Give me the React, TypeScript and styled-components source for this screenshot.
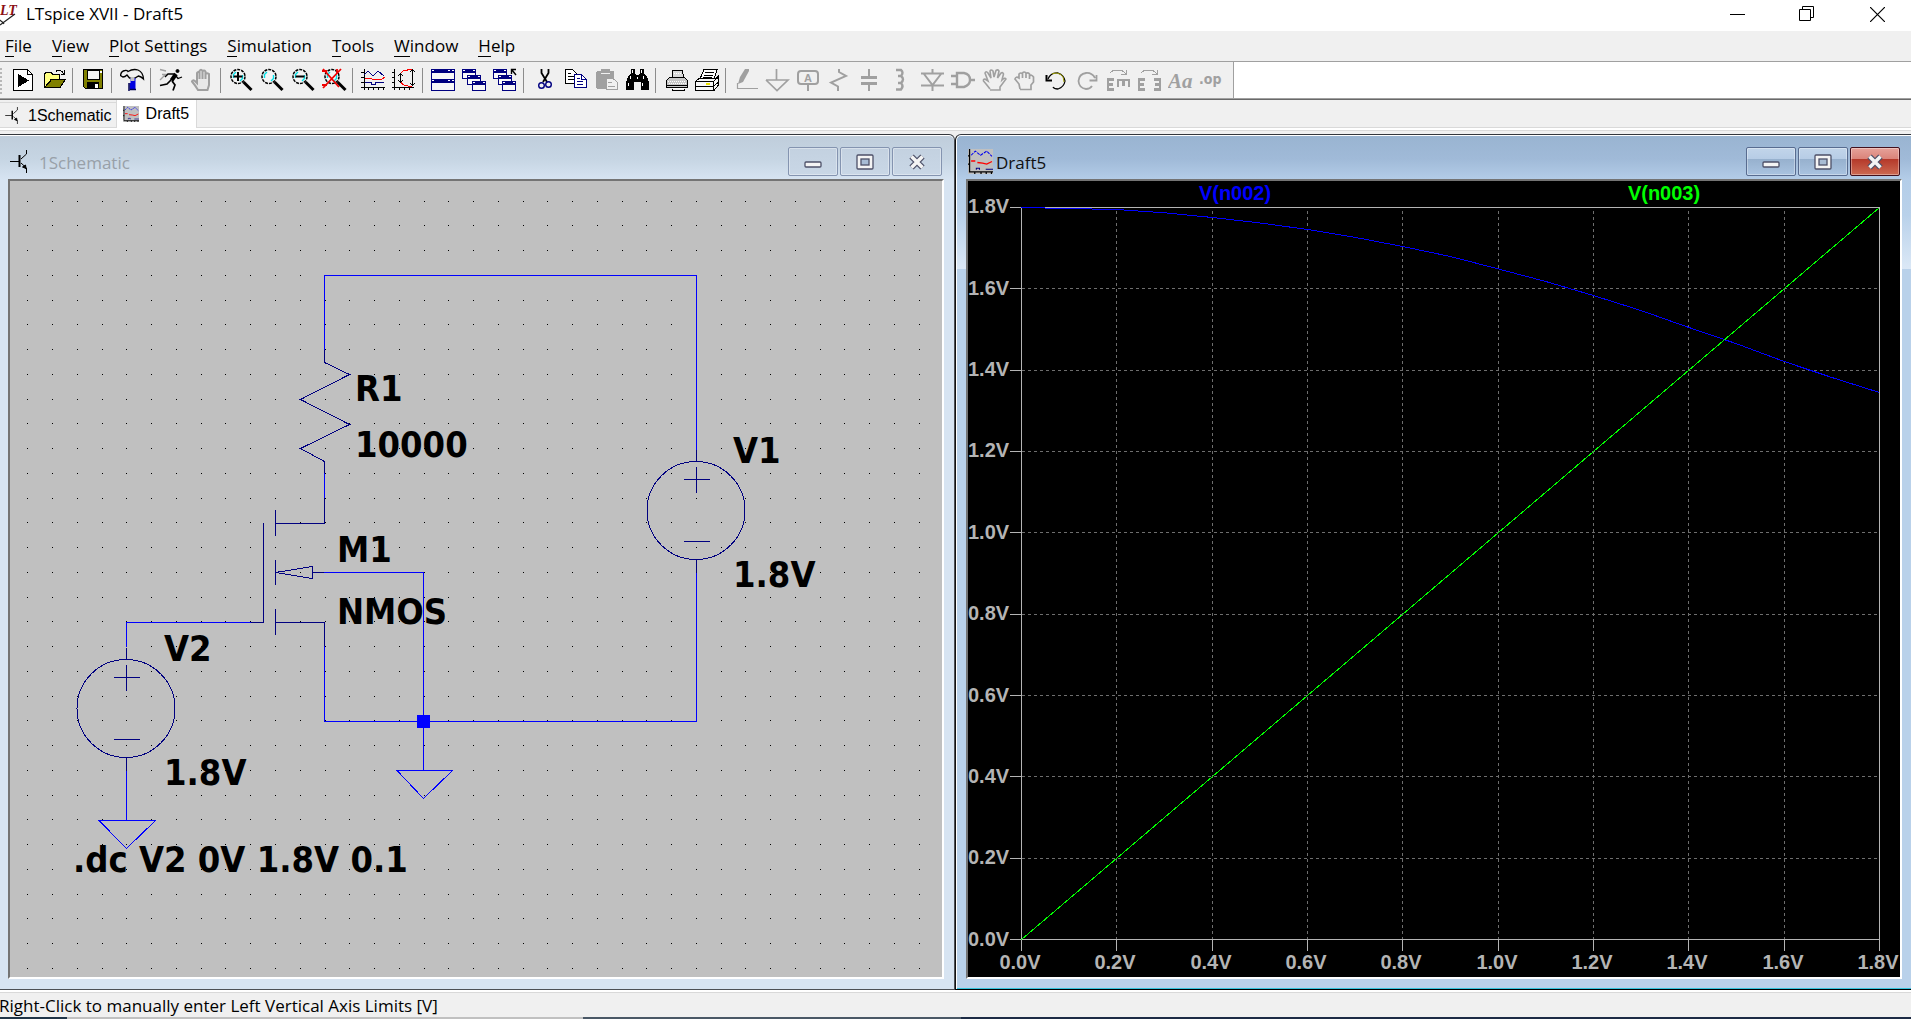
import React, { useLayoutEffect, useRef, useState } from "react";
import styled, { createGlobalStyle } from "styled-components";

const ui = '"Open Sans", "Noto Sans", sans-serif';
const arial = '"Liberation Sans", Arial, sans-serif';

const GlobalStyle = createGlobalStyle`
  * { box-sizing: border-box; }
  body { margin: 0; background: #f0f0f0; }
  button { font: inherit; color: inherit; border: 0; padding: 0; background: none; }
  svg { display: block; flex: none; }
`;

const Shell = styled.div`
  min-height: 100vh;
  display: flex;
  flex-direction: column;
  overflow: hidden;
  font: 17px/22px ${ui};
  color: #000;
`;

const TitleBar = styled.header`
  height: 31px;
  display: flex;
  align-items: center;
  background: #fff;
  padding-bottom: 3px;
`;
const AppTitle = styled.h1`
  flex: 1;
  margin: 0;
  padding-left: 5px;
  font-size: 17px;
  font-weight: 400;
`;
const CaptionButton = styled.button`
  width: 70px;
  height: 28px;
  padding-left: 2px;
  display: grid;
  place-items: center;
`;

const MenuBar = styled.nav`
  height: 31px;
  display: flex;
  align-items: center;
  gap: 20px;
  padding-left: 5px;
  border-bottom: 1px solid #a0a0a0;
`;
const MenuItem = styled.button`
  white-space: nowrap;
`;
const Accel = styled.span`
  display: inline-block;
  line-height: 20px;
  border-bottom: 1px solid #000;
`;

const ToolStrip = styled.div`
  height: 38px;
  display: flex;
  background: #fff;
  border-bottom: 1px solid #696969;
  box-shadow: inset 0 -1px #a0a0a0;
`;
const ToolBar = styled.div`
  display: flex;
  align-items: flex-start;
  height: 36px;
  padding: 6px 6px 0 0;
  background: #f0f0f0;
  border-right: 1px solid #a0a0a0;
`;
const Grip = styled.div`
  width: 2px;
  height: 26px;
  margin-right: 6px;
  background: repeating-linear-gradient(#b8b8b8 0 2px, #f0f0f0 2px 4px);
`;
const ToolGroup = styled.div`
  display: flex;
  & + & { margin-left: 2px; padding-left: 5px; border-left: 1px solid #8c8c8c; }
`;
const ToolButton = styled.button`
  width: 31px;
  height: 25px;
  padding: 0 3px;
`;

const TabRow = styled.div`
  height: 34px;
  background: linear-gradient(#f0f0f0 27px, #d9d9d9 27px 28px, #fff 28px 30px, #d9d9d9 30px 31px, #f0f0f0 31px);
  display: flex;
  align-items: flex-start;
  font-family: ${arial};
  font-size: 16px;
`;
const Tab = styled.button<{ $active?: boolean }>`
  display: flex;
  align-items: center;
  height: ${(p) => (p.$active ? 28 : 25)}px;
  margin-top: ${(p) => (p.$active ? 0 : 2)}px;
  padding: ${(p) => (p.$active ? "0 7px 1px 6px" : "1px 4px 0 5px")};
  gap: ${(p) => (p.$active ? 7 : 10)}px;
  background: ${(p) => (p.$active ? "#fff" : "#f0f0f0")};
  border: solid #d9d9d9;
  border-width: ${(p) => (p.$active ? "0 1px" : "1px 0 0")};
`;

const Workspace = styled.main`
  flex: 1;
  display: grid;
  grid-template-columns: minmax(0, 955fr) minmax(0, 956fr);
`;
const Frame = styled.section<{ $active?: boolean }>`
  display: flex;
  flex-direction: column;
  min-width: 0;
  border-top: 1px solid #33373d;
  border-bottom: 1px solid ${(p) => (p.$active ? "#000" : "#4c4f55")};
  border-left: ${(p) => (p.$active ? "1px solid #111" : "0")};
  border-right: ${(p) => (p.$active ? "0" : "1px solid #4c4f55")};
  border-radius: ${(p) => (p.$active ? "6px 0 0 0" : "0 6px 0 0")};
  padding: ${(p) => (p.$active ? "0 9px 10px 10px" : "0 10px 10px 8px")};
  background: ${(p) =>
    p.$active
      ? "linear-gradient(#99b4d1, #a0bad8 24px, #b4cde8 45px, #b9d1ea 80px, #dbe8f6 134px, #b9d1ea 134px)"
      : "linear-gradient(#bfcddb, #c6d5e3 24px, #d7e4f2 45px)"};
  box-shadow: inset 0 1px #fff, inset 1px 0 ${(p) => (p.$active ? "#fff" : "transparent")},
    inset 0 -1px ${(p) => (p.$active ? "#35c4dd" : "#d7e4f2")};
`;
const FrameTitle = styled.div`
  height: 44px;
  display: flex;
  align-items: center;
  gap: 2px;
  padding: 12px 2px 3px;
`;
const FrameName = styled.h2<{ $active?: boolean }>`
  flex: 1;
  margin: 0;
  padding: 3px 0 0 ${(p) => (p.$active ? 1 : 10)}px;
  font-size: 17px;
  font-weight: 400;
  line-height: 26px;
  color: ${(p) => (p.$active ? "#101010" : "#98a0a8")};
`;
const FrameButton = styled.button<{ $look: "idle" | "live" | "close" }>`
  width: 50px;
  height: 29px;
  display: grid;
  place-items: center;
  border-radius: 2px;
  border: 1px solid ${(p) => ({ idle: "#8494b0", live: "#586c90", close: "#43101c" })[p.$look]};
  box-shadow: inset 0 0 0 1px rgba(255, 255, 255, 0.35);
  background: ${(p) =>
    ({
      idle: "linear-gradient(#c3d1e0, #c9d7e6)",
      live: "linear-gradient(#c2d5ea, #b6cce5 42%, #97b1ce 42%, #a9c3e0)",
      close: "linear-gradient(#e6a29a, #da8278 42%, #b5392a 42%, #cc6a52)",
    })[p.$look]};
`;
const Client = styled.div<{ $bg: string }>`
  flex: 1;
  position: relative;
  overflow: hidden;
  min-height: 0;
  background: ${(p) => p.$bg};
  border: solid;
  border-width: 2px;
  border-color: #747474 #fff #fff #747474;
`;
const Canvas = styled.svg`
  position: absolute;
  inset: 0;
  width: 100%;
  height: 100%;
`;
const StatusBar = styled.footer`
  height: 29px;
  padding: 3px 0 0;
  background: linear-gradient(#fff 2px, #d9d9d9 2px 3px, #f0f0f0 3px);
  display: flex;
  flex-direction: column;
  justify-content: space-between;
`;
const StatusText = styled.div`
  margin-left: -1px;
  line-height: 26px;
  height: 24px;
`;
const Taskbar = styled.div`
  height: 2px;
  background: linear-gradient(90deg, #1f3447 67px, #c0c0c0 67px 583px, #4a5866 583px 961px, #1d2b45 961px);
`;

/* ---------- icons ---------- */

type Art = { name: string; art: React.ReactNode };
const g = "#a0a0a0";
const navy = "#000080";

const Icon = ({ children }: { children: React.ReactNode }) => (
  <svg width="25" height="25" viewBox="0 0 25 25" fill="none" aria-hidden="true">
    {children}
  </svg>
);

const lens = (
  <>
    <circle cx="9" cy="8.5" r="7" fill="#f4f4f4" stroke="#000" strokeWidth="1.5" strokeDasharray="3 1" />
    <path d="M4.500 10V6.500L7 4M11 13L13.500 10.500V7" stroke="#00e0e8" strokeWidth="1.400" />
    <path d="M14.500 14L22.500 22" stroke="#000" strokeWidth="3" />
  </>
);
const miniWin = (x: number, y: number) => (
  <g shapeRendering="crispEdges">
    <rect x={x + 0.5} y={y + 0.5} width="13" height="9" fill="#f8f8f8" stroke={navy} />
    <rect x={x} y={y} width="14" height="4" fill={navy} />
    <path d={`M${x + 1} ${y + 1.5}h2M${x + 11} ${y + 1.5}h2`} stroke="#fff" />
  </g>
);

const groups: Art[][] = [
  [
    {
      name: "Run",
      art: (
        <g shapeRendering="crispEdges">
          <path d="M2.500 1.500H16.500L21.500 6.500V22.500H2.500Z" fill="#fff" stroke="#000" />
          <path d="M16.500 1.500V6.500H21.500" stroke="#000" />
          <path d="M7 6L18 12.500L7 19Z" fill="#000" />
        </g>
      ),
    },
    {
      name: "Open",
      art: (
        <g shapeRendering="crispEdges">
          <path d="M2.500 19V6L4.500 4H8.500L10.500 6H17.500V11H9.500L3 19Z" fill="#ffff80" stroke="#000" />
          <path d="M3 19.500L9.500 11.500H23.500L18 19.500Z" fill="#808000" stroke="#000" />
          <path d="M14 3.500Q17 .5 20 3.500L22 6M22.500 2V6.500H18.500" stroke="#000" />
        </g>
      ),
    },
  ],
  [
    {
      name: "Save",
      art: (
        <g shapeRendering="crispEdges">
          <path d="M2.500 1.500H21.500V20.500H4.500L2.500 18.500Z" fill="#808000" stroke="#000" />
          <path d="M6 2H18V11H6Z" fill="#f4f4f4" stroke="#000" />
          <path d="M6 14H18V21H6Z" fill="#000" />
          <path d="M14 16H17V20H14Z" fill="#fff" />
          <path d="M19 3h2v2h-2z" fill="#fff" />
        </g>
      ),
    },
  ],
  [
    {
      name: "Control panel",
      art: (
        <g>
          <path d="M.5 7.500Q1 3 5 2.500Q7 2 8 3.500Q13 .5 18 2Q23 4 23.500 11Q21 8.500 18.500 8L15 10H9.500L7 7Q5 9 3 9Z" fill="#f0f0f0" stroke="#000" strokeWidth="1.300" />
          <path d="M10.500 10H15.500V22H9.500V15H10.500Z" fill="#0000e0" />
          <path d="M9 15V23M10 21.500H16" stroke="#000050" strokeWidth="1.500" />
          <path d="M10.500 9V13H14.500V9" fill="#c0c0c0" />
        </g>
      ),
    },
  ],
  [
    {
      name: "Simulate",
      art: (
        <g stroke="#000">
          <path d="M1 1.500L7 3M3 6.500H9M1 12L6 7" stroke="#a0a0a0" strokeWidth="1.400" />
          <circle cx="18.500" cy="3" r="1.500" fill="#000" />
          <path d="M17 6L12.500 12.500" strokeWidth="4" />
          <path d="M15 6H9L6 9M17 8L19 10.500L23 9" strokeWidth="1.300" />
          <path d="M12 12L8 16L1 17.500M13 13L16 17L14 22.500" strokeWidth="1.700" />
        </g>
      ),
    },
    {
      name: "Halt",
      art: (
        <path
          d="M8 22Q5 17 2 13.500Q2.500 11.500 5 13L7 15V5Q8 3 9.500 5V11V3Q11 .5 12.500 3V11V3.500Q14 1.500 15.500 3.500V11V6Q17 4.500 19 6V17L17.500 22Z"
          fill="#e8e8e8"
          stroke={g}
          strokeWidth="2"
        />
      ),
    },
  ],
  [
    { name: "Zoom in", art: <>{lens}<path d="M4.500 8.500H13.500M9 4V13" stroke="#000" strokeWidth="2" /></> },
    { name: "Zoom area", art: lens },
    { name: "Zoom out", art: <>{lens}<path d="M4.500 8.500H13.500" stroke="#000" strokeWidth="2" /></> },
    {
      name: "Zoom to fit",
      art: (
        <>
          <g transform="translate(1 0)">{lens}</g>
          <path d="M1 1L17 19M19 1L1 20M0 3H5M0 17H5M15 1V5" stroke="#f00000" strokeWidth="1.800" />
        </>
      ),
    },
  ],
  [
    {
      name: "Autorange",
      art: (
        <g shapeRendering="crispEdges">
          <path d="M3.500 1V22M0 19.500H24M0 4.500H3M0 9.500H3M0 14.500H3M7.500 20V22M12.500 20V22M17.500 20V22M22.500 20V22" stroke="#000" />
          <path d="M3 7L7 3L12 8L17 3L23 8" stroke={navy} />
          <path d="M4 10H8L12 11.500H16L20 11.500L24 9" stroke="#f00" />
          <path d="M4 14.500H10V16.500H14V14.500H23" stroke={navy} />
        </g>
      ),
    },
    {
      name: "Plot limits",
      art: (
        <g shapeRendering="crispEdges">
          <path d="M2.500 1V22M0 19.500H22M0 4.500H3M0 9.500H3M0 14.500H3M7.500 20V22M12.500 20V22M17.500 20V22" stroke="#000" />
          <path d="M8 6L11 3L20 1M8 14L12 17L20 19" stroke="#f00" />
          <path d="M8.500 6V14M6 8L8.500 5.500L11 8M6 12L8.500 14.500L11 12M20.500 1V18M18 4L20.500 1.500L23 4M18 15L20.500 17.500L23 15" stroke="#000" />
        </g>
      ),
    },
  ],
  [
    {
      name: "Tile windows",
      art: (
        <g shapeRendering="crispEdges">
          <rect x=".5" y="1.500" width="23" height="21" fill="#f8f8f8" stroke={navy} />
          <path d="M0 3H24M0 13H24" stroke={navy} strokeWidth="4" />
          <path d="M1 2.500H3M17 2.500H19M21 2.500H23M1 12.500H3M17 12.500H19M21 12.500H23" stroke="#fff" />
        </g>
      ),
    },
    { name: "Cascade windows", art: <>{miniWin(0, 1)}{miniWin(5, 7)}{miniWin(10, 13)}</> },
    {
      name: "Close windows",
      art: (
        <>
          {miniWin(0, 1)}{miniWin(5, 7)}
          <g transform="translate(-1 0)">{miniWin(10, 13)}</g>
          <path d="M18.500 6V1.500H23M19 2L23 7" stroke="#000" strokeWidth="1.400" />
        </>
      ),
    },
  ],
  [
    {
      name: "Cut",
      art: (
        <>
          <path d="M9.500 1V5L15 14M16.500 1V5L11 14" stroke="#000" strokeWidth="1.800" />
          <circle cx="9.500" cy="17.500" r="2.800" stroke={navy} strokeWidth="1.400" />
          <circle cx="16.500" cy="16.500" r="2.800" stroke={navy} strokeWidth="1.400" />
        </>
      ),
    },
    {
      name: "Copy",
      art: (
        <g shapeRendering="crispEdges">
          <path d="M2.500 1.500H9.500L13.500 5.500V15.500H2.500Z" fill="#fff" stroke="#000" />
          <path d="M5 5.500H8M5 8.500H11M5 11.500H11" stroke="#000" />
          <path d="M11.500 6.500H18.500L23.500 11.500V19.500H11.500Z" fill="#fff" stroke={navy} />
          <path d="M14 10.500H17M14 13.500H20M14 16.500H20M18.500 6.500V11.500H23" stroke={navy} />
        </g>
      ),
    },
    {
      name: "Paste",
      art: (
        <g shapeRendering="crispEdges">
          <path d="M3 3H7V1H16V3H20V10H12V21H3L2 20V4Z" fill={g} />
          <path d="M7 5.500H16" stroke="#f0f0f0" />
          <path d="M12.500 10.500H19L23.500 14.500V21.500H12.500Z" fill="#f0f0f0" stroke={g} />
          <path d="M14 14.500H18M14 18H21" stroke={g} />
        </g>
      ),
    },
    {
      name: "Find",
      art: (
        <g shapeRendering="crispEdges">
          <path d="M6 1H10V5L11 7H14L15 5V1H19V5L22 9L24 14V22H16V14H9V22H1V14L3 9L6 5Z" fill="#000" />
          <path d="M7.500 2V5M16.500 2V5M5.500 8V11M3.500 15V18M18.500 8V11M17.500 15V18M12 9V11" stroke="#fff" />
        </g>
      ),
    },
  ],
  [
    {
      name: "Print",
      art: (
        <g shapeRendering="crispEdges">
          <path d="M8 10L9 2.500H18L20 10" fill="#d8d8d8" stroke="#000" />
          <path d="M5.500 9.500H20.500L23.500 12.500V19.500H2.500V12.500Z" fill="#c8c8c8" stroke="#000" />
          <path d="M3 17.500H23M8 20.500V22.500H20V20.500" stroke="#000" />
          <path d="M9 20.500H20" stroke="#fff" />
          <path d="M4 13.500H22M5 15.500H22M10 5.500H17" stroke="#fff" strokeDasharray="1 1" />
        </g>
      ),
    },
    {
      name: "Print setup",
      art: (
        <g shapeRendering="crispEdges">
          <path d="M5 11L9 1.500H22L19 11" fill="#fff" stroke="#000" />
          <path d="M10 4.500H19M9 7H18M8 9.500H17" stroke="#000" />
          <path d="M.5 13.500L4 10.500H20L23.500 8V17L19 22.500H.5Z" fill="#f8f8f8" stroke="#000" />
          <path d="M.5 13.500H18.500V22M18.500 13.500L23.500 9M.5 18.500H18.500L23.500 14" stroke="#000" />
          <path d="M11 16H15" stroke="#e8e000" strokeWidth="2" />
        </g>
      ),
    },
  ],
  [
    {
      name: "Wire",
      art: (
        <g>
          <path d="M4 16L6 9L11 1H15V3L9 14Z" fill={g} />
          <path d="M3.500 15V20.500H24" stroke={g} strokeWidth="1.200" />
        </g>
      ),
    },
    { name: "Ground", art: <path d="M11.500 1V12M1 12H23L12 22.500L1 12" stroke={g} strokeWidth="1.700" /> },
    {
      name: "Label net",
      art: (
        <>
          <rect x="2" y="3" width="20" height="13" rx="3" stroke={g} strokeWidth="2" />
          <path d="M12 16V23" stroke={g} strokeWidth="2" />
          <text x="12" y="13.500" textAnchor="middle" fontFamily="Liberation Sans, sans-serif" fontSize="11" fontWeight="700" fill={g}>A</text>
        </>
      ),
    },
    { name: "Resistor", art: <path d="M12 1V4L19 8L4 14.500L11 18.500V23" stroke={g} strokeWidth="2" /> },
    { name: "Capacitor", art: <path d="M3 9.500H19M3 15.500H19M11 1V9M11 16V23" stroke={g} strokeWidth="2.500" shapeRendering="crispEdges" /> },
    { name: "Inductor", art: <path d="M7 2H12Q15 4.500 12 8H9M12 8Q16 11 12 15H9M12 15Q15 18 12 21.500H7" stroke={g} strokeWidth="2.400" /> },
    {
      name: "Diode",
      art: <path d="M12.500 1V5M1 5.500H24M4 6L12.500 17L21 6M1 17.500H24M12.500 17V23" stroke={g} strokeWidth="2" />,
    },
    {
      name: "Component",
      art: <path d="M6 5V19H13Q19 17 19 12Q19 6 13 5ZM0 8H6M0 16H6M19 12H24" stroke={g} strokeWidth="2.400" />,
    },
    {
      name: "Move",
      art: (
        <path
          d="M8 21Q5 17 1.500 13Q1 11 3 11L6 13L3 5Q4 2.500 6 5L9 10L8 3Q9 1 11 3L12 9L14 2.500Q16 1 17 3L15.500 10L19 5Q21 4 21.500 6L20 12Q23 9 24 11L18 19V22H8"
          stroke={g}
          strokeWidth="1.600"
        />
      ),
    },
    {
      name: "Drag",
      art: (
        <path
          d="M7 21L6 16L2 11Q3 8 6 10V6Q8 4 9.500 6V10V5Q11 3 13 5V10V5.500Q15 4 16.500 6V11V8Q18.500 6 20.500 9V14L18 17V21.500H7"
          stroke={g}
          strokeWidth="1.700"
        />
      ),
    },
    {
      name: "Undo",
      art: (
        <>
          <path d="M4 11Q7 4 14 5Q20 7 21 13Q20 19 14 21Q10 21 9 19" stroke="#000" strokeWidth="1.300" />
          <path d="M8 6Q12 3.500 17 6.500Q20 9 20 14" stroke="#a0a000" />
          <path d="M2.500 7V12.500H8" stroke="#000" strokeWidth="2" />
        </>
      ),
    },
    {
      name: "Redo",
      art: <path d="M20 10Q17 4.500 11 5Q4 6 3.500 13Q4 20 11 21Q15 21 17 18M21.500 7V12.500H14.500" stroke={g} strokeWidth="1.800" />,
    },
    {
      name: "Rotate",
      art: (
        <g stroke={g} shapeRendering="crispEdges">
          <path d="M4 5L7 2.500H16L20 6M20.500 2V6.500H15" />
          <path d="M8 11.500H2V21.500H8M2 16.500H7M11 12H24M12 12V19M17.500 12V18M23 12V19" strokeWidth="2.400" />
        </g>
      ),
    },
    {
      name: "Mirror",
      art: (
        <g stroke={g} shapeRendering="crispEdges">
          <path d="M4 5L7 2.500H16L20 6M20.500 2V6.500H15" />
          <path d="M8 11.500H2V21.500H8M2 16.500H7M17 11.500H23V21.500H17M18 16.500H23" strokeWidth="2.400" />
        </g>
      ),
    },
    {
      name: "Text",
      art: (
        <text x="0" y="20" fontFamily="Liberation Serif, serif" fontSize="21" fontStyle="italic" fontWeight="700" fill={g}>Aa</text>
      ),
    },
    {
      name: "SPICE directive",
      art: (
        <text x="0" y="16" fontFamily="DejaVu Sans Condensed, DejaVu Sans, sans-serif" fontSize="14" fontWeight="700" fill={g}>.op</text>
      ),
    },
  ],
];

const LogoIcon = () => (
  <svg width="21" height="28" viewBox="0 0 21 28" aria-hidden="true">
    <text x="0" y="15" fontFamily="Liberation Serif, serif" fontSize="14" fontWeight="700" fontStyle="italic" fill="#8b0f14">LT</text>
    <path d="M0 25L15 14M-2 19Q3 22 4 24" stroke="#222" strokeWidth="1.200" fill="none" />
  </svg>
);
const TransistorIcon = ({ w, h }: { w: number; h: number }) => (
  <svg width={w} height={h} viewBox="0 0 17 23" fill="none" stroke="#000" aria-hidden="true">
    <path d="M0 11.500H9M16.500 0V4L11 9" />
    <path d="M9.500 5V17" strokeWidth="2" />
    <path d="M11 13L16.500 18V23" />
    <path d="M12.500 17L16 18.500L15.500 15Z" fill="#000" />
  </svg>
);
const WaveIcon = ({ size }: { size: number }) => (
  <svg width={size} height={size} viewBox="0 0 24 24" fill="none" aria-hidden="true">
    <path d="M0 0H24V24H0Z" fill="#c0c0c0" />
    <path d="M1.500 0V22H24M0 6.500H2M0 14.500H2M6.500 22V24M12.500 22V24M17.500 22V24M22.500 22V24" stroke="#000" strokeWidth="1.200" />
    <path d="M3 6L7 2L12 6L18 2L23 7" stroke="#0000f0" strokeDasharray="3 1" />
    <path d="M3 11.500H7M9 13L14 13.500L18 14.500L23 12" stroke="#f00" strokeWidth="1.300" />
    <path d="M8 20V18.500H11V20M17 19.500H24" stroke={navy} />
  </svg>
);

const glyphs = {
  min: <rect x="1" y="9" width="16" height="5" rx="1" fill="#f4f4f4" stroke="#4d5068" strokeWidth="1.300" />,
  max: (
    <>
      <rect x="1" y="2" width="16" height="14" rx="1" fill="#f4f4f4" stroke="#4d5068" strokeWidth="1.300" />
      <rect x="5" y="6" width="8" height="6" fill="#a8bcd4" stroke="#4d5068" strokeWidth="1.300" />
    </>
  ),
  close: (
    <>
      <path d="M3.500 3.500L14.500 14.500M14.500 3.500L3.500 14.500" stroke="#4d5068" strokeWidth="6" />
      <path d="M3.500 3.500L14.500 14.500M14.500 3.500L3.500 14.500" stroke="#f4f4f4" strokeWidth="3.500" />
    </>
  ),
};

const FrameButtons = ({ active }: { active?: boolean }) => (
  <>
    {(["min", "max", "close"] as const).map((k) => (
      <FrameButton key={k} aria-label={k} $look={!active ? "idle" : k === "close" ? "close" : "live"}>
        <svg width="18" height="18" viewBox="0 0 18 18" fill="none">{glyphs[k]}</svg>
      </FrameButton>
    ))}
  </>
);

/* ---------- drawings ---------- */

function useSize(w: number, h: number) {
  const ref = useRef<HTMLDivElement>(null);
  const [size, setSize] = useState({ w, h });
  useLayoutEffect(() => {
    const el = ref.current;
    if (!el) return;
    const read = () => setSize({ w: el.clientWidth, h: el.clientHeight });
    read();
    const ro = new ResizeObserver(read);
    ro.observe(el);
    return () => ro.disconnect();
  }, []);
  return { ref, ...size };
}

const Label = styled.text`
  font: 700 36px "DejaVu Sans Condensed", "DejaVu Sans", sans-serif;
  fill: #000;
`;
const Wire = styled.path`
  stroke: #0000ff;
  fill: none;
`;
const Part = styled.path`
  stroke: #000080;
  fill: none;
`;

const Source = ({ x, y }: { x: number; y: number }) => (
  <>
    <circle cx={x} cy={y} r="49" fill="none" stroke={navy} />
    <Part
      d={`M${x + 0.5} ${y - 61}v12M${x + 0.5} ${y + 49}v13M${x - 12} ${y - 31}h26M${x + 0.5} ${y - 44}v26M${x - 12} ${y + 31}h26`}
    />
  </>
);

const Schematic = () => {
  const { ref, w, h } = useSize(932, 796);
  const dots: string[] = [];
  for (let j = 0; 20 + j * 24.75 < h; j++)
    for (let i = 0; 17 + i * 24.758 < w; i++)
      dots.push(`M${Math.round(17.43 + i * 24.758)} ${Math.round(19.6 + j * 24.75) + 0.5}h1`);
  return (
    <Client ref={ref} $bg="#c0c0c0">
      <Canvas shapeRendering="crispEdges" role="img" aria-label="Schematic">
        <path d={dots.join("")} stroke="#000" />
        <Label x="345" y="220">R1</Label>
        <Label x="345" y="276">10000</Label>
        <Label x="723" y="282">V1</Label>
        <Label x="723" y="406">1.8V</Label>
        <Label x="327" y="381">M1</Label>
        <Label x="327" y="443">NMOS</Label>
        <Label x="154" y="480">V2</Label>
        <Label x="154" y="604">1.8V</Label>
        <Label x="63" y="691">.dc V2 0V 1.8V 0.1</Label>
        <Wire d="M314.500 170V94.500H686.500V269M314.500 280V342M116.500 466V441.500H242M314 391.500H413.500V590M314.500 465V540.500H686.500V392M116.500 588V640M89 639.500H145.500L116.500 667.500ZM387 589.500H442.500L413.500 617.500Z" />
        <Part d="M314.500 169V181.500L339.500 193.500L290.500 218.500L339.500 243.500L290.500 267.500L314.500 280.500V292M314.500 317V342.500H265.500M265.500 329V355M265.500 379V404M265.500 428V454M265.500 441.500H314.500V465M253.500 342V441.500H241M265.500 391.500L302.500 385.500V397.500ZM302.500 391.500H314" />
        <Source x={116} y={527.5} />
        <Source x={686} y={329.5} />
        <rect x="407" y="534" width="13" height="13" fill="#0000ff" />
      </Canvas>
    </Client>
  );
};

const Tick = styled.text<{ $color?: string }>`
  font: 700 20px ${arial};
  fill: ${(p) => p.$color ?? "#b4b4b4"};
`;

const drop = [0, 0.0025, 0.005, 0.013, 0.0245, 0.038, 0.054, 0.0735, 0.096, 0.1205, 0.151, 0.182, 0.2165, 0.2535, 0.295, 0.335, 0.3787, 0.418, 0.455];

const Plot = () => {
  const { ref, w, h } = useSize(932, 796);
  const left = 53.5, top = 26.5, right = w - 20.5, bottom = h - 37.5;
  const px = (v: number) => left + ((right - left) * v) / 1.8;
  const py = (v: number) => bottom - ((bottom - top) * v) / 1.8;
  const snap = (n: number) => Math.floor(n) + 0.5;
  const steps = Array.from({ length: 10 }, (_, i) => i * 0.2);
  const inner = steps.slice(1, 9);
  const line = (f: (i: number) => number) =>
    drop.map((_, i) => `${i ? "L" : "M"}${px(i / 10)} ${py(f(i))}`).join("");
  return (
    <Client ref={ref} $bg="#000">
      <Canvas shapeRendering="crispEdges" role="img" aria-label="DC sweep" fill="none">
        <path
          stroke="#6e6e6e"
          strokeDasharray="3 3"
          d={
            inner.map((v) => `M${snap(px(v))} ${top + 3.5}V${bottom}`).join("") +
            inner.map((v) => `M${left} ${snap(py(v))}H${right}`).join("")
          }
        />
        <path
          stroke="#b4b4b4"
          d={
            `M${left} ${top}H${right}V${bottom}H${left}Z` +
            steps.map((v) => `M${snap(px(v))} ${bottom}v11.500M${left} ${snap(py(v))}h-11.500`).join("")
          }
        />
        <path stroke="#0000ff" d={line((i) => 1.8 - drop[i])} />
        <path stroke="#00ff00" d={line((i) => i / 10)} />
        {steps.map((v) => (
          <React.Fragment key={v}>
            <Tick x={0} y={Math.round(py(v) + 6)}>{v.toFixed(1)}V</Tick>
            <Tick x={Math.floor(px(v)) - 1} y={h - 8} textAnchor="middle">{v.toFixed(1)}V</Tick>
          </React.Fragment>
        ))}
        <Tick x={Math.floor(px(0.45)) - 1} y="19" textAnchor="middle" $color="#0000ff">V(n002)</Tick>
        <Tick x={Math.floor(px(1.35)) - 1} y="19" textAnchor="middle" $color="#00ff00">V(n003)</Tick>
      </Canvas>
    </Client>
  );
};

export default function App() {
  return (
    <Shell>
      <GlobalStyle />
      <TitleBar>
        <LogoIcon />
        <AppTitle>LTspice XVII - Draft5</AppTitle>
        <CaptionButton aria-label="Minimize">
          <svg width="15" height="15"><path d="M0 7.500H15" stroke="#000" /></svg>
        </CaptionButton>
        <CaptionButton aria-label="Restore">
          <svg width="16" height="16" fill="none" stroke="#000">
            <path d="M.5 3.500H11.500V14.500H.5ZM3.500 3.500V.5H14.500V11.500H11.500" />
          </svg>
        </CaptionButton>
        <CaptionButton aria-label="Close">
          <svg width="15" height="15"><path d="M0 0L15 15M15 0L0 15" stroke="#000" strokeWidth="1.200" /></svg>
        </CaptionButton>
      </TitleBar>
      <MenuBar>
        {["File", "View", "Plot Settings", "Simulation", "Tools", "Window", "Help"].map((m) => (
          <MenuItem key={m}><Accel>{m[0]}</Accel>{m.slice(1)}</MenuItem>
        ))}
      </MenuBar>
      <ToolStrip>
        <ToolBar role="toolbar">
          <Grip />
          {groups.map((items, i) => (
            <ToolGroup key={i}>
              {items.map((t) => (
                <ToolButton key={t.name} aria-label={t.name}><Icon>{t.art}</Icon></ToolButton>
              ))}
            </ToolGroup>
          ))}
        </ToolBar>
      </ToolStrip>
      <TabRow>
        <Tab><TransistorIcon w={13} h={17} />1Schematic</Tab>
        <Tab $active><WaveIcon size={16} />Draft5</Tab>
      </TabRow>
      <Workspace>
        <Frame>
          <FrameTitle>
            <TransistorIcon w={17} h={23} />
            <FrameName>1Schematic</FrameName>
            <FrameButtons />
          </FrameTitle>
          <Schematic />
        </Frame>
        <Frame $active>
          <FrameTitle>
            <WaveIcon size={25} />
            <FrameName $active>Draft5</FrameName>
            <FrameButtons active />
          </FrameTitle>
          <Plot />
        </Frame>
      </Workspace>
      <StatusBar>
        <StatusText>Right-Click to manually enter Left Vertical Axis Limits [V]</StatusText>
        <Taskbar />
      </StatusBar>
    </Shell>
  );
}
